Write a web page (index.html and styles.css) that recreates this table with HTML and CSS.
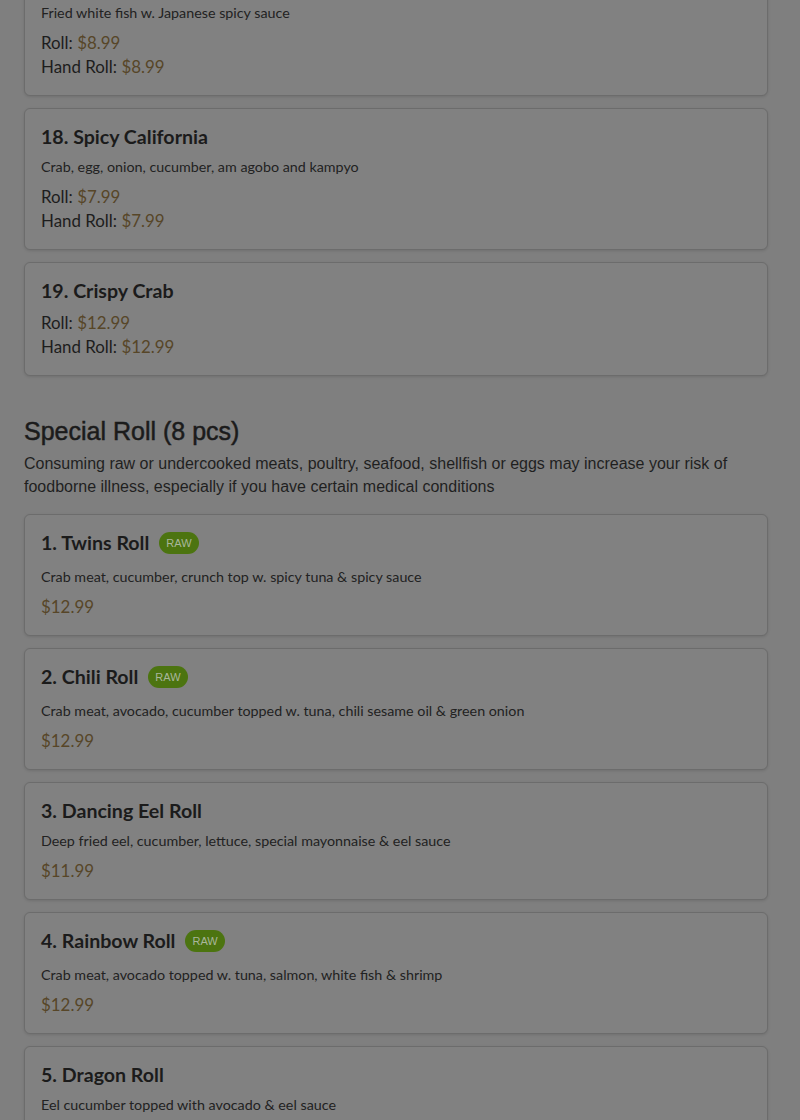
FILE: index.html
```html
<!DOCTYPE html>
<html lang="en">
<head>
<meta charset="utf-8">
<title>Menu</title>
<link rel="stylesheet" href="styles.css">
</head>
<body>
<main class="menu">
  <section class="section">
    <div class="cards">
      <article class="card card-clipped">
        <p class="desc">Fried white fish w. Japanese spicy sauce</p>
        <div class="prices">
          <div class="price-line">Roll: <span class="price">$8.99</span></div>
          <div class="price-line">Hand Roll: <span class="price">$8.99</span></div>
        </div>
      </article>
      <article class="card">
        <div class="title-row"><h3 class="title">18. Spicy California</h3></div>
        <p class="desc">Crab, egg, onion, cucumber, am agobo and kampyo</p>
        <div class="prices">
          <div class="price-line">Roll: <span class="price">$7.99</span></div>
          <div class="price-line">Hand Roll: <span class="price">$7.99</span></div>
        </div>
      </article>
      <article class="card">
        <div class="title-row"><h3 class="title">19. Crispy Crab</h3></div>
        <div class="prices">
          <div class="price-line">Roll: <span class="price">$12.99</span></div>
          <div class="price-line">Hand Roll: <span class="price">$12.99</span></div>
        </div>
      </article>
    </div>
  </section>

  <section class="section">
    <h2 class="section-title">Special Roll (8 pcs)</h2>
    <p class="section-note">Consuming raw or undercooked meats, poultry, seafood, shellfish or eggs may increase your risk of foodborne illness, especially if you have certain medical conditions</p>
    <div class="cards">
      <article class="card">
        <div class="title-row has-badge"><h3 class="title">1. Twins Roll</h3><span class="badge">RAW</span></div>
        <p class="desc">Crab meat, cucumber, crunch top w. spicy tuna &amp; spicy sauce</p>
        <div class="prices"><div class="price-line"><span class="price">$12.99</span></div></div>
      </article>
      <article class="card">
        <div class="title-row has-badge"><h3 class="title">2. Chili Roll</h3><span class="badge">RAW</span></div>
        <p class="desc">Crab meat, avocado, cucumber topped w. tuna, chili sesame oil &amp; green onion</p>
        <div class="prices"><div class="price-line"><span class="price">$12.99</span></div></div>
      </article>
      <article class="card">
        <div class="title-row"><h3 class="title">3. Dancing Eel Roll</h3></div>
        <p class="desc">Deep fried eel, cucumber, lettuce, special mayonnaise &amp; eel sauce</p>
        <div class="prices"><div class="price-line"><span class="price">$11.99</span></div></div>
      </article>
      <article class="card">
        <div class="title-row has-badge"><h3 class="title">4. Rainbow Roll</h3><span class="badge">RAW</span></div>
        <p class="desc">Crab meat, avocado topped w. tuna, salmon, white fish &amp; shrimp</p>
        <div class="prices"><div class="price-line"><span class="price">$12.99</span></div></div>
      </article>
      <article class="card">
        <div class="title-row"><h3 class="title">5. Dragon Roll</h3></div>
        <p class="desc">Eel cucumber topped with avocado &amp; eel sauce</p>
        <div class="prices"><div class="price-line"><span class="price">$12.99</span></div></div>
      </article>
    </div>
  </section>
</main>
</body>
</html>
```

FILE: styles.css
```css
html, body {
  margin: 0;
  padding: 0;
  background: #7f7f7f;
}
body {
  font-family: Lato, "Open Sans", sans-serif;
  color: #1d1d1d;
  overflow: hidden;
  height: 1120px;
}
.menu {
  padding: 0 32px 0 24px;
}
.section + .section {
  margin-top: 39px;
}
.cards {
  display: flex;
  flex-direction: column;
  gap: 12px;
}
.card {
  background: #818181;
  border: 1px solid #6c6c6c;
  border-radius: 6px;
  padding: 16px;
  box-shadow: 0 1px 3px rgba(0, 0, 0, 0.12);
}
.card-clipped {
  margin-top: -14px;
}
.title-row {
  display: flex;
  align-items: center;
  gap: 10px;
  height: 24px;
  margin-bottom: 8px;
}
.title-row.has-badge {
  margin-bottom: 12px;
}
.title {
  margin: 0;
  font-size: 19.6px;
  line-height: 24px;
  font-weight: 700;
  color: #1b1b1b;
}
.badge {
  display: inline-flex;
  align-items: center;
  justify-content: center;
  height: 22px;
  padding: 0 7px;
  border-radius: 11px;
  background: #4c7410;
  color: #a9b69b;
  font-family: "Liberation Sans", Arial, sans-serif;
  font-size: 11px;
  font-weight: 400;
}
.desc {
  margin: 0 0 8px;
  font-size: 14.3px;
  line-height: 20px;
  color: #222;
}
.price-line {
  font-size: 16.9px;
  line-height: 24px;
  color: #1d1d1d;
}
.price {
  color: #574628;
}
.section-title {
  margin: 0;
  font-family: "Liberation Sans", Arial, sans-serif;
  font-size: 25px;
  line-height: 32px;
  font-weight: 400;
  -webkit-text-stroke: 0.5px #1b1b1b;
  color: #1b1b1b;
}
.section-note {
  margin: 5px 0 16px;
  font-family: "Liberation Sans", Arial, sans-serif;
  font-size: 16px;
  line-height: 23px;
  color: #1f1f1f;
}
```
